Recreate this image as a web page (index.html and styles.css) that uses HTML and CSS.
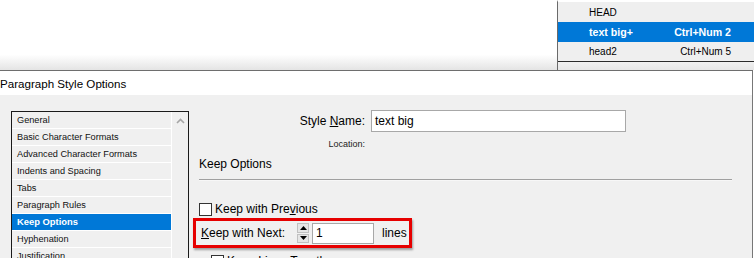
FILE: index.html
```html
<!DOCTYPE html>
<html>
<head>
<meta charset="utf-8">
<link rel="stylesheet" href="styles.css">
</head>
<body>
<div class="top">
  <div class="top-left"></div>
  <div class="panel">
    <div class="prow"><span>HEAD</span><span></span></div>
    <div class="prow sel"><span>text big+</span><span>Ctrl+Num 2</span></div>
    <div class="prow"><span>head2</span><span>Ctrl+Num 5</span></div>
    <div class="pfoot"></div>
  </div>
</div>
<div class="dialog">
  <div class="title">Paragraph Style Options</div>
  <div class="dbody">
    <div class="list">
      <div class="items">
        <div class="item">General</div>
        <div class="item">Basic Character Formats</div>
        <div class="item">Advanced Character Formats</div>
        <div class="item">Indents and Spacing</div>
        <div class="item">Tabs</div>
        <div class="item">Paragraph Rules</div>
        <div class="item active">Keep Options</div>
        <div class="item">Hyphenation</div>
        <div class="item">Justification</div>
        <div class="item">Span Columns</div>
      </div>
      <div class="scroll">
        <svg class="chev" width="9" height="6" viewBox="0 0 9 6"><path d="M1 5 L4.5 1.5 L8 5" fill="none" stroke="#a6a6a6" stroke-width="1.6"/></svg>
      </div>
    </div>
    <div class="main">
      <div class="namerow">
        <div class="lab">Style <u>N</u>ame:</div>
        <div class="field name">text big</div>
      </div>
      <div class="locrow"><div class="lab small">Location:</div></div>
      <div class="heading">Keep Options</div>
      <div class="sep"></div>
      <div class="check"><span class="box"></span><span>Keep with Pre<u>v</u>ious</span></div>
      <div class="redrow">
        <span class="nextlab"><u>K</u>eep with Next:</span>
        <span class="spin">
          <span class="sbtn"><svg width="7" height="4" viewBox="0 0 7 4"><path d="M0 4 L3.5 0 L7 4 Z" fill="#000"/></svg></span>
          <span class="sbtn"><svg width="7" height="4" viewBox="0 0 7 4"><path d="M0 0 L3.5 4 L7 0 Z" fill="#000"/></svg></span>
        </span>
        <span class="field num">1</span>
        <span class="lines">lines</span>
      </div>
      <div class="check indent"><span class="box"></span><span>Keep Lines Together</span></div>
    </div>
  </div>
</div>
</body>
</html>
```

FILE: styles.css
```css
html, body {
  margin: 0;
  padding: 0;
}
body {
  width: 754px;
  height: 258px;
  overflow: hidden;
  background: #fff;
  font-family: "Liberation Sans", Arial, sans-serif;
  color: #000;
}
.top {
  display: flex;
  height: 70px;
}
.top-left {
  flex: 1;
  background: linear-gradient(to bottom, #ffffff 0%, #ffffff 78%, #e4e4e4 100%);
}
.panel {
  width: 197px;
  border-left: 1px solid #6a6a6a;
  background: #efefef;
  display: flex;
  flex-direction: column;
  border-top: 2px solid #fff;
  box-sizing: border-box;
}
.prow {
  height: 20px;
  display: flex;
  align-items: center;
  justify-content: space-between;
  padding: 0 23px 0 31px;
  font-size: 10px;
}
.prow:nth-child(3) {
  height: 19px;
}
.prow.sel {
  background: #0078d7;
  color: #fff;
  font-weight: bold;
  font-size: 10.6px;
}
.pfoot {
  flex: 1;
  border-top: 1px solid #2a2a2a;
  background: linear-gradient(to bottom, #f0f0f0, #e6e6e6);
}
.dialog {
  width: 752px;
  height: 188px;
  border-top: 1px solid #6e6e6e;
  border-right: 1px solid #777;
  background: #f0f0f0;
  display: flex;
  flex-direction: column;
}
.title {
  height: 24px;
  background: #fff;
  font-size: 11.6px;
  line-height: 25px;
  padding-left: 0;
  white-space: nowrap;
}
.dbody {
  flex: 1;
  display: flex;
  align-items: flex-start;
  padding-top: 15px;
  overflow: hidden;
}
.list {
  margin-top: 1px;
  margin-left: 11px;
  width: 176px;
  height: 170px;
  border: 1px solid #1a1a1a;
  display: flex;
  background: #f0f0f0;
}
.items {
  width: 159px;
  display: flex;
  flex-direction: column;
}
.item {
  height: 16px;
  border-bottom: 1px solid #fff;
  font-size: 9.2px;
  line-height: 16px;
  padding-left: 5px;
  white-space: nowrap;
  color: #111;
}
.item.active {
  background: #0078d7;
  color: #fff;
  font-weight: bold;
  font-size: 9.4px;
}
.scroll {
  flex: 1;
  border-left: 1px solid #fff;
  display: flex;
  justify-content: center;
  padding-top: 6px;
}
.chev {
  display: block;
}
.main {
  flex: 1;
  padding: 0 20px 0 10px;
  display: flex;
  flex-direction: column;
  font-size: 12px;
}
.namerow {
  display: flex;
  align-items: center;
  gap: 6px;
  height: 22px;
}
.lab {
  width: 166px;
  text-align: right;
  white-space: nowrap;
}
.field {
  background: #fff;
  border: 1px solid #a8a8a8;
  box-sizing: border-box;
  padding-left: 3px;
  white-space: nowrap;
}
.field.name {
  width: 255px;
  height: 22px;
  line-height: 20px;
}
.locrow {
  display: flex;
  margin-top: 7px;
  height: 11px;
}
.lab.small {
  font-size: 9px;
  line-height: 11px;
  color: #222;
}
.heading {
  margin-top: 7px;
  height: 14px;
  line-height: 14px;
  white-space: nowrap;
}
.sep {
  margin-top: 8px;
  height: 1px;
  background: #a0a0a0;
  border-bottom: 1px solid #f7f7f7;
}
.check {
  margin-top: 21px;
  display: flex;
  align-items: center;
  gap: 3px;
  height: 14px;
  white-space: nowrap;
}
.box {
  width: 13px;
  height: 13px;
  box-sizing: border-box;
  border: 1px solid #333;
  background: #fff;
}
.redrow {
  margin-top: 2px;
  margin-left: -6px;
  width: 219px;
  height: 30px;
  box-sizing: border-box;
  border: 3px solid #e60000;
  box-shadow: 1px 2px 2px rgba(0,0,0,0.35);
  display: flex;
  align-items: center;
  padding-left: 5px;
  white-space: nowrap;
}
.nextlab {
  width: 96px;
}
.spin {
  width: 12px;
  height: 20px;
  display: flex;
  flex-direction: column;
  gap: 1px;
  margin-right: 3px;
}
.sbtn {
  flex: 1;
  background: #e5e5e5;
  border: 1px solid #c0c0c0;
  display: flex;
  align-items: center;
  justify-content: center;
}
.sbtn svg {
  display: block;
}
.field.num {
  width: 62px;
  height: 21px;
  line-height: 19px;
}
.lines {
  margin-left: 8px;
}
.check.indent {
  margin-top: 6px;
  padding-left: 12px;
}
```
